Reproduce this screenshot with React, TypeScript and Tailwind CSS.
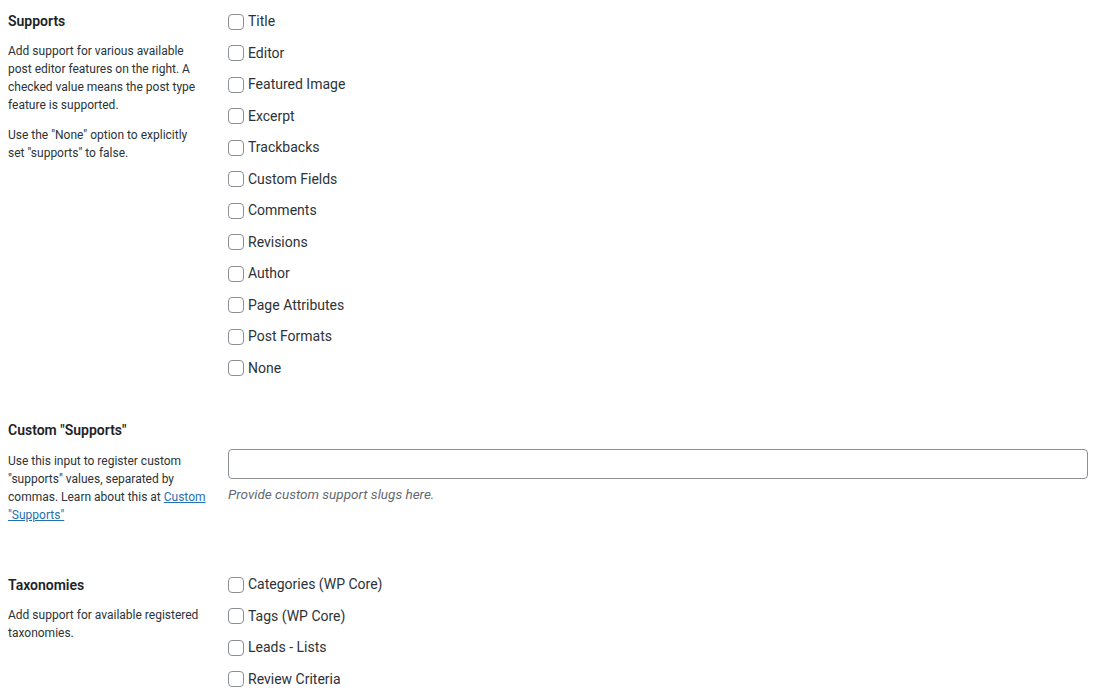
const supports = [
    'Title',
    'Editor',
    'Featured Image',
    'Excerpt',
    'Trackbacks',
    'Custom Fields',
    'Comments',
    'Revisions',
    'Author',
    'Page Attributes',
    'Post Formats',
    'None',
];

const taxonomies = ['Categories (WP Core)', 'Tags (WP Core)', 'Leads - Lists', 'Review Criteria'];

const CheckRow = ({ label }: { label: string }) => (
    <label className="flex items-center h-[31.5px] gap-[4px] text-[14px] text-[#2c3338] cursor-pointer">
        <span className="w-4 h-4 border border-[#8c8f94] rounded-[4px] bg-white shrink-0" />
        <span>{label}</span>
    </label>
);

export default function App() {
    return (
        <div className="bg-white min-h-[697px] text-[#1d2327] font-['Roboto','Liberation_Sans',sans-serif]">
            {/* Supports */}
            <div className="flex pt-[6px]">
                <div className="w-[228px] shrink-0 pl-[8px] pr-[20px] pt-[5px]">
                    <h3 className="text-[14px] leading-[20px] font-semibold">Supports</h3>
                    <p className="mt-[11px] text-[12px] leading-[18px] text-[#2c3338]">
                        Add support for various available post editor features on the right. A checked value means the
                        post type feature is supported.
                    </p>
                    <p className="mt-[12px] mr-[12px] text-[12px] leading-[18px] text-[#2c3338]">
                        Use the "None" option to explicitly set "supports" to false.
                    </p>
                </div>
                <div className="flex-1">
                    {supports.map((s) => (
                        <CheckRow key={s} label={s} />
                    ))}
                </div>
            </div>

            {/* Custom Supports */}
            <div className="flex mt-[36px]">
                <div className="w-[228px] shrink-0 pl-[8px] pr-[20px]">
                    <h3 className="text-[14px] leading-[20px] font-semibold">Custom "Supports"</h3>
                    <p className="mt-[12px] text-[12px] leading-[18px] text-[#2c3338]">
                        Use this input to register custom "supports" values, separated by commas. Learn about this at{' '}
                        <a href="#" className="text-[#2271b1] underline">
                            Custom "Supports"
                        </a>
                    </p>
                </div>
                <div className="flex-1 pt-[29px] pr-[12px]">
                    <input
                        type="text"
                        className="block w-full h-[30px] border border-[#8c8f94] rounded-[4px] px-2 text-[14px] outline-none"
                    />
                    <p className="mt-[6px] text-[13.5px] leading-[18px] italic text-[#646970]">
                        Provide custom support slugs here.
                    </p>
                </div>
            </div>

            {/* Taxonomies */}
            <div className="flex mt-[45px]">
                <div className="w-[228px] shrink-0 pl-[8px] pr-[20px] pt-[6px]">
                    <h3 className="text-[14px] leading-[20px] font-semibold">Taxonomies</h3>
                    <p className="mt-[11px] text-[12px] leading-[18px] text-[#2c3338]">
                        Add support for available registered taxonomies.
                    </p>
                </div>
                <div className="flex-1">
                    {taxonomies.map((t) => (
                        <CheckRow key={t} label={t} />
                    ))}
                </div>
            </div>
        </div>
    );
}
